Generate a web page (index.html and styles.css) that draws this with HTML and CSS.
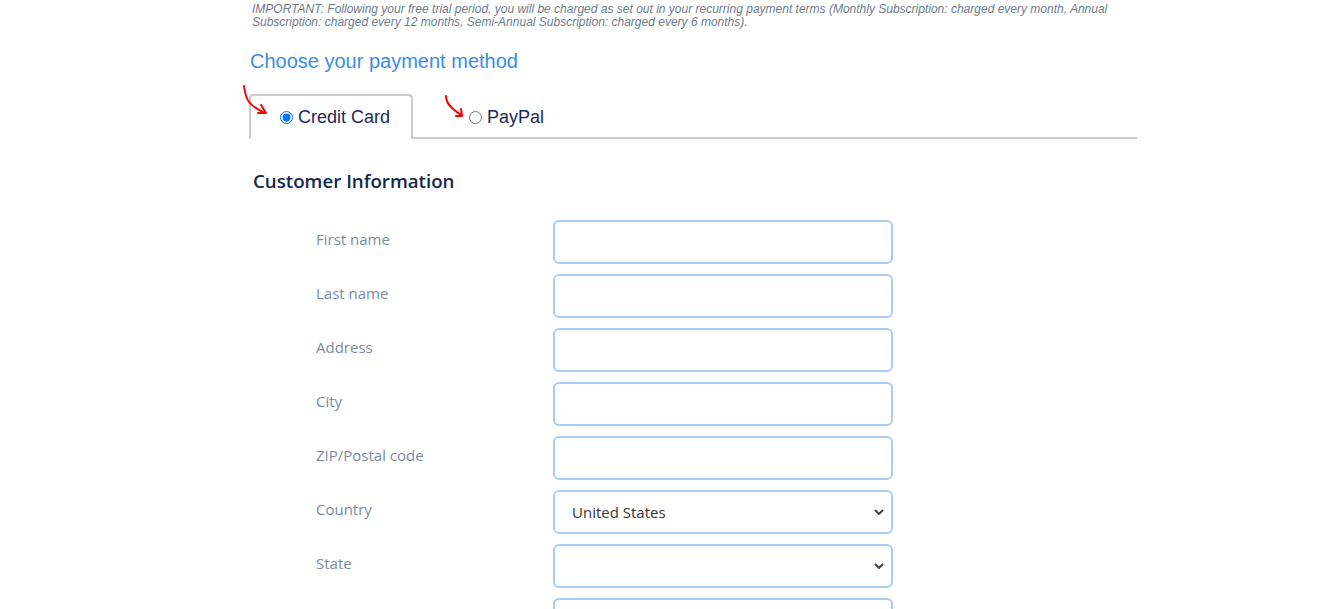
FILE: index.html
```html
<!DOCTYPE html>
<html lang="en">
<head>
  <meta charset="UTF-8" />
  <meta name="viewport" content="width=device-width, initial-scale=1.0"/>
  <title>Checkout</title>
  <link rel="stylesheet" href="styles.css">
</head>
<body>
  <div class="page">
    <p class="notice">IMPORTANT: Following your free trial period, you will be charged as set out in your recurring payment terms (Monthly Subscription: charged every month, Annual Subscription: charged every 12 months, Semi-Annual Subscription: charged every 6 months).</p>

    <h2 class="choose">Choose your payment method</h2>

    <!-- Payment tabs -->
    <div class="tabs">
      <label class="tab active">
        <input type="radio" name="method" value="card" checked />
        <span>Credit Card</span>
      </label>
      <label class="tab paypal">
        <input type="radio" name="method" value="paypal" />
        <span>PayPal</span>
      </label>

      <svg class="hint hint-card" width="30" height="34" viewBox="0 0 30 34">
        <path d="M5 3 C6 12 8 17 11 20 C15 25 20 27 26 30" fill="none" stroke="#f00" stroke-width="2" stroke-linecap="round"/>
        <path d="M22 22 L27 30 L19 30" fill="none" stroke="#f00" stroke-width="2" stroke-linecap="round" stroke-linejoin="round"/>
      </svg>
      <svg class="hint hint-paypal" width="24" height="26" viewBox="0 0 24 26">
        <path d="M3 3 C3 9 6 12 9 15 C12 18 14 19 18 22" fill="none" stroke="#f00" stroke-width="2" stroke-linecap="round"/>
        <path d="M18 16 L19 23 L13 23" fill="none" stroke="#f00" stroke-width="2" stroke-linecap="round" stroke-linejoin="round"/>
      </svg>
    </div>

    <h3 class="section-title">Customer Information</h3>

    <form class="customer">
      <label class="field-label" for="firstName">First name</label>
      <input class="field" type="text" id="firstName" />

      <label class="field-label" for="lastName">Last name</label>
      <input class="field" type="text" id="lastName" />

      <label class="field-label" for="address">Address</label>
      <input class="field" type="text" id="address" />

      <label class="field-label" for="city">City</label>
      <input class="field" type="text" id="city" />

      <label class="field-label" for="zip">ZIP/Postal code</label>
      <input class="field" type="text" id="zip" />

      <label class="field-label" for="country">Country</label>
      <select class="field" id="country">
        <option>United States</option>
        <option>Canada</option>
        <option>United Kingdom</option>
      </select>

      <label class="field-label" for="state">State</label>
      <select class="field" id="state">
        <option></option>
        <option>California</option>
        <option>New York</option>
      </select>

      <span class="field-label"></span>
      <input class="field" type="text" id="phone" aria-label="Phone" />
    </form>
  </div>
</body>
</html>
```

FILE: styles.css
```css
* {
  box-sizing: border-box;
}

body {
  margin: 0;
  background: #fff;
  font-family: "Liberation Sans", Arial, sans-serif;
}

.page {
  width: 888px;
  margin-left: 249px;
  padding-bottom: 40px;
}

.notice {
  margin: 0;
  padding: 3px 0 0 3px;
  width: 862px;
  font-size: 12px;
  line-height: 13px;
  font-style: italic;
  color: #6f7b8a;
}

.choose {
  margin: 20px 0 0 1px;
  font-size: 20px;
  line-height: 24px;
  font-weight: normal;
  color: #3a8ee3;
}

/* tabs */
.tabs {
  position: relative;
  display: flex;
  margin-top: 21px;
  border-bottom: 2px solid #ccc;
}

.tab {
  display: flex;
  align-items: center;
  gap: 5px;
  height: 45px;
  margin-bottom: -2px;
  padding-bottom: 1px;
  border: 2px solid transparent;
  border-bottom: none;
  font-size: 18px;
  color: #1c2b55;
  cursor: pointer;
}

.tab input {
  margin: 0;
  width: 13px;
  height: 13px;
}

.tab.active {
  width: 164px;
  padding-left: 29px;
  border-color: #ccc;
  border-radius: 4px 4px 0 0;
  background: #fff;
}

.tab.paypal {
  padding-left: 54px;
}

.hint {
  position: absolute;
  pointer-events: none;
}

.hint-card {
  left: -10px;
  top: -11px;
}

.hint-paypal {
  left: 194px;
  top: -1px;
}

/* customer information */
.section-title {
  margin: 29px 0 0 4px;
  font-family: "Open Sans", "Noto Sans", sans-serif;
  font-size: 18.7px;
  line-height: 26px;
  font-weight: 600;
  color: #14284b;
}

.customer {
  display: grid;
  grid-template-columns: 237px 340px;
  row-gap: 10px;
  margin: 26px 0 0 67px;
}

.field-label {
  padding-top: 9px;
  font-family: "Open Sans", "Noto Sans", sans-serif;
  font-size: 15px;
  line-height: 20px;
  color: #7d8b9e;
}

.field {
  height: 44px;
  width: 340px;
  padding: 0 17px;
  border: 2px solid #a8cdf6;
  border-radius: 6px;
  background: #fff;
  font-family: "Open Sans", "Noto Sans", sans-serif;
  font-size: 15px;
  color: #333;
  outline: none;
}

select.field {
  appearance: none;
  -webkit-appearance: none;
  background-image: url("data:image/svg+xml;utf8,<svg xmlns='http://www.w3.org/2000/svg' width='10' height='6' viewBox='0 0 10 6'><path d='M1 1 L5 5 L9 1' fill='none' stroke='%23444' stroke-width='2'/></svg>");
  background-repeat: no-repeat;
  background-position: right 7px center;
}
```
